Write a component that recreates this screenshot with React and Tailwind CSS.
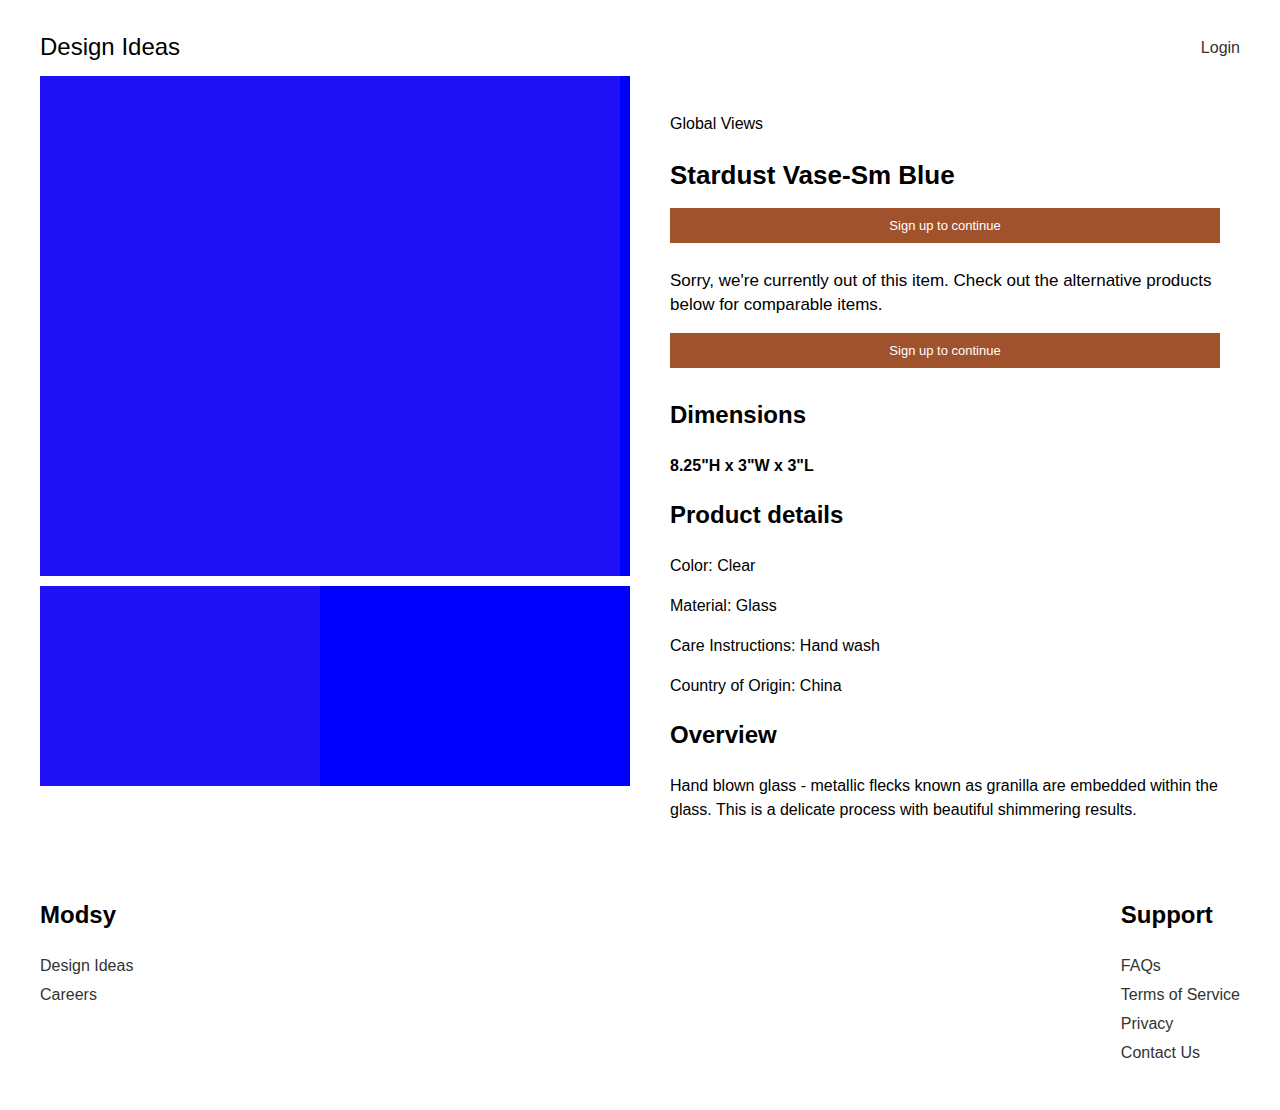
export default function App() {
  const font = { fontFamily: '"Liberation Sans", Arial, sans-serif' };
  return (
    <div className="bg-white text-black min-h-[1110px] px-10" style={font}>
      <header className="flex items-center justify-between pt-[32px] h-[62px]">
        <div className="text-[24px] leading-[30px] text-black">Design Ideas</div>
        <div className="text-[16px] leading-[24px] text-[#333] pt-[2px]">Login</div>
      </header>
      <main className="flex mt-[14px]">
        <div className="w-[590px] shrink-0 flex flex-col gap-[10px]">
          <div className="flex h-[500px] overflow-hidden">
            <div className="w-[580px] shrink-0 bg-[#2010f5]"></div>
            <div className="w-[10px] shrink-0 bg-[#0000ff]"></div>
          </div>
          <div className="flex h-[200px] overflow-hidden">
            <div className="w-[280px] shrink-0 bg-[#2010f5]"></div>
            <div className="w-[310px] shrink-0 bg-[#0000ff]"></div>
          </div>
        </div>
        <div className="ml-[40px] w-[550px] pt-[36px]">
          <div className="text-[16px] leading-[24px]">Global Views</div>
          <h1 className="mt-[23px] text-[26px] leading-[33px] font-bold">Stardust Vase-Sm Blue</h1>
          <button className="mt-[16px] w-full h-[35px] bg-[#a0522d] text-white text-[13px]">Sign up to continue</button>
          <p className="mt-[26px] text-[17px] leading-[24px]">
            Sorry, we're currently out of this item. Check out the alternative products below for comparable items.
          </p>
          <button className="mt-[16px] w-full h-[35px] bg-[#a0522d] text-white text-[13px]">Sign up to continue</button>
          <h2 className="mt-[32px] text-[24px] leading-[29px] font-bold">Dimensions</h2>
          <div className="mt-[27px] text-[16px] leading-[20px] font-bold">8.25"H x 3"W x 3"L</div>
          <h2 className="mt-[24px] text-[24px] leading-[29px] font-bold">Product details</h2>
          <div className="mt-[25px] flex flex-col gap-[16px] text-[16px] leading-[24px]">
            <div>Color: Clear</div>
            <div>Material: Glass</div>
            <div>Care Instructions: Hand wash</div>
            <div>Country of Origin: China</div>
          </div>
          <h2 className="mt-[22px] text-[24px] leading-[29px] font-bold">Overview</h2>
          <p className="mt-[25px] text-[16px] leading-[24px]">
            Hand blown glass - metallic flecks known as granilla are embedded within the glass. This is a delicate process with beautiful shimmering results.
          </p>
        </div>
      </main>
      <footer className="flex justify-between mt-[78px] pb-[40px]">
        <div>
          <h3 className="text-[24px] leading-[29px] font-bold">Modsy</h3>
          <ul className="mt-[25px] flex flex-col gap-[5px] text-[16px] leading-[24px] text-[#333]">
            <li>Design Ideas</li>
            <li>Careers</li>
          </ul>
        </div>
        <div>
          <h3 className="text-[24px] leading-[29px] font-bold">Support</h3>
          <ul className="mt-[25px] flex flex-col gap-[5px] text-[16px] leading-[24px] text-[#333]">
            <li>FAQs</li>
            <li>Terms of Service</li>
            <li>Privacy</li>
            <li>Contact Us</li>
          </ul>
        </div>
      </footer>
    </div>
  );
}
